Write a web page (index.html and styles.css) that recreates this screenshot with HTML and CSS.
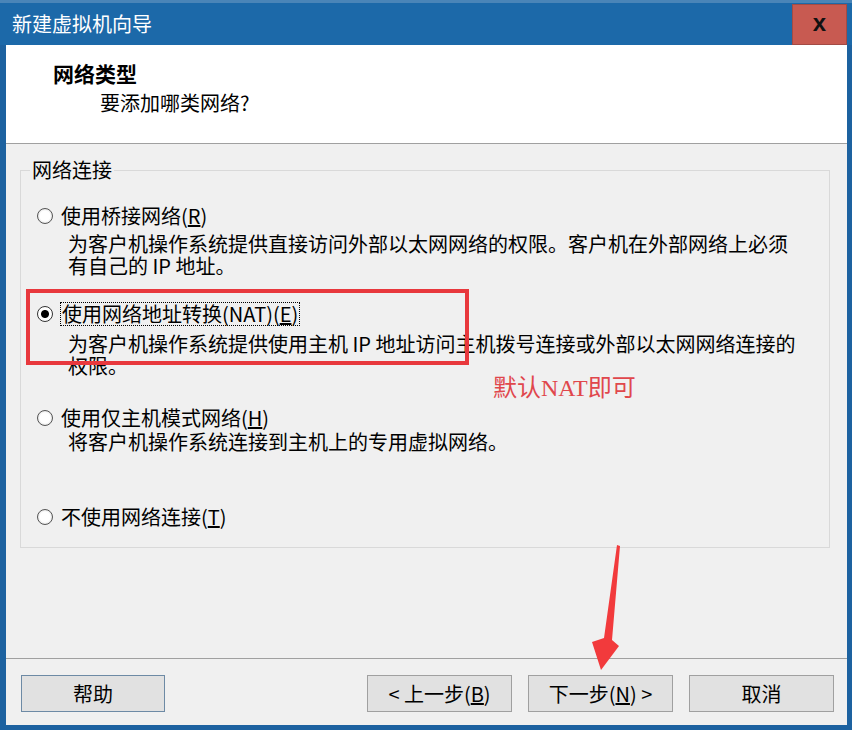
FILE: index.html
```html
<!DOCTYPE html>
<html lang="zh-CN">
<head>
<meta charset="utf-8">
<title>新建虚拟机向导</title>
<link rel="stylesheet" href="styles.css">
</head>
<body>
<div class="window">
  <div class="titlebar">
    <div class="title">新建虚拟机向导</div>
    <div class="close">x</div>
  </div>
  <div class="client">
    <div class="header">
      <h1>网络类型</h1>
      <p>要添加哪类网络?</p>
    </div>
    <div class="content">
      <fieldset class="group">
        <legend>网络连接</legend>
        <div class="opt opt1">
          <span class="radio"></span><span class="lbl">使用桥接网络(<u>R</u>)</span>
        </div>
        <div class="desc d1">为客户机操作系统提供直接访问外部以太网网络的权限。客户机在外部网络上必须<br>有自己的 IP 地址。</div>
        <div class="opt opt2">
          <span class="radio on"></span><span class="lbl focus">使用网络地址转换(NAT)(<u>E</u>)</span>
        </div>
        <div class="desc d2">为客户机操作系统提供使用主机 IP 地址访问主机拨号连接或外部以太网网络连接的<br>权限。</div>
        <div class="opt opt3">
          <span class="radio"></span><span class="lbl">使用仅主机模式网络(<u>H</u>)</span>
        </div>
        <div class="desc d3">将客户机操作系统连接到主机上的专用虚拟网络。</div>
        <div class="opt opt4">
          <span class="radio"></span><span class="lbl">不使用网络连接(<u>T</u>)</span>
        </div>
      </fieldset>
      <div class="spacer"></div>
      <div class="footer">
        <button class="btn help">帮助</button>
        <button class="btn">&lt; 上一步(<u>B</u>)</button>
        <button class="btn">下一步(<u>N</u>) &gt;</button>
        <button class="btn">取消</button>
      </div>
    </div>
  </div>

  <div class="mark-box"></div>
  <div class="mark-text">默认NAT即可</div>
  <svg class="mark-arrow" width="852" height="730" viewBox="0 0 852 730">
    <polygon points="617,545 620,546 612,640 619,646 601,670 592,642 604,638" fill="#f23a3c"/>
  </svg>
</div>
</body>
</html>
```
FILE: styles.css
```css
* { box-sizing: border-box; }
html, body { margin: 0; padding: 0; }
body {
  width: 852px;
  height: 730px;
  overflow: hidden;
  font-family: "Noto Sans CJK SC", "Microsoft YaHei", sans-serif;
  font-size: 20px;
  color: #000;
  background: #1d64a2;
}
.window {
  position: relative;
  width: 852px;
  height: 730px;
  background: #1d62a0;
  display: flex;
  flex-direction: column;
}
.titlebar {
  height: 45px;
  flex: none;
  display: flex;
  justify-content: space-between;
  align-items: flex-end;
  background: #1c69a9;
  border-top: 3px solid #4a85b8;
}
.title {
  align-self: center;
  padding-left: 12px;
  color: #fff;
  line-height: 26px;
  font-size: 20px;
}
.close {
  width: 55px;
  height: 41px;
  margin-right: 5px;
  background: #c85a51;
  border: 1px solid #a34b45;
  display: flex;
  align-items: center;
  justify-content: center;
  font: bold 24px "Liberation Sans", Arial, sans-serif;
  color: #111;
  padding-bottom: 3px;
}
.client {
  flex: 1;
  margin: 0 5px 5px 6px;
  background: #f0f0f0;
  display: flex;
  flex-direction: column;
}
.header {
  height: 99px;
  flex: none;
  background: #fff;
  border-bottom: 1px solid #a0a0a0;
  padding-top: 15px;
}
.header h1 {
  margin: 0 0 0 47px;
  font-size: 21px;
  font-weight: 700;
  line-height: 26px;
}
.header p {
  margin: 5px 0 0 94px;
  line-height: 24px;
}
.content {
  flex: 1;
  display: flex;
  flex-direction: column;
}
.group {
  margin: 14px 17px 0 14px;
  padding: 22px 16px 18px 16px;
  border: 1px solid #d9d9d9;
  min-width: 0;
}
.group legend {
  margin-left: -7px;
  padding: 0 2px;
  line-height: 24px;
}
.opt {
  display: flex;
  align-items: center;
  height: 24px;
  line-height: 24px;
}
.radio {
  flex: none;
  width: 16px;
  height: 16px;
  border-radius: 50%;
  border: 1px solid #555;
  background: radial-gradient(circle, #fff 0 5px, #e8e8e8 7px);
  margin-right: 8px;
}
.radio.on {
  border-color: #333;
  background: radial-gradient(circle, #000 0 3.5px, #fff 4.5px);
}
.lbl { white-space: nowrap; }
.lbl.focus {
  border: 1px dotted #000;
  line-height: 22px;
  padding: 0 1px;
  margin-left: -1px;
}
.desc {
  padding-left: 31px;
  line-height: 22px;
  white-space: nowrap;
}
.d1 { margin-top: 5px; }
.opt2 { margin-top: 25px; }
.d2 { margin-top: 7px; }
.opt3 { margin-top: 29px; }
.d3 { margin-top: 1px; }
.opt4 { margin-top: 52px; }
.spacer { flex: 1; }
.footer {
  flex: none;
  height: 67px;
  border-top: 1px solid #a0a0a0;
  padding: 16px 13px 13px 15px;
  display: flex;
  gap: 16px;
}
.btn {
  width: 145px;
  height: 37px;
  border: 1px solid #a0a0a0;
  background: #e1e1e1;
  font: inherit;
  font-size: 20px;
  color: #000;
  line-height: 1;
  padding: 0;
  display: flex;
  align-items: center;
  justify-content: center;
}
.btn.help {
  width: 144px;
  margin-right: auto;
  border-color: #6d8aa5;
}
.mark-box {
  position: absolute;
  left: 26px;
  top: 289px;
  width: 443px;
  height: 76px;
  border: 4px solid #e8383d;
}
.mark-text {
  position: absolute;
  left: 493px;
  top: 373px;
  font-family: "Liberation Serif", "Noto Sans CJK SC", serif;
  font-size: 24px;
  line-height: 30px;
  color: #e0474c;
  white-space: nowrap;
}
.mark-arrow {
  position: absolute;
  left: 0;
  top: 0;
  pointer-events: none;
}
```
